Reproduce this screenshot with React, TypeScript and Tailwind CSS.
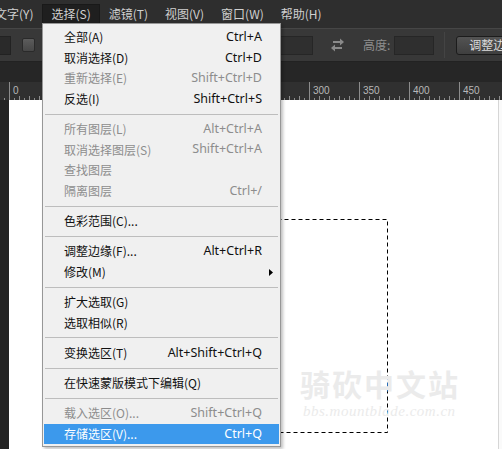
import React from "react";

type Item =
  | { sep: true }
  | { sep?: false; l: string; s?: string; d?: boolean; sub?: boolean; hl?: boolean };

const items: Item[] = [
  { l: "全部(A)", s: "Ctrl+A" },
  { l: "取消选择(D)", s: "Ctrl+D" },
  { l: "重新选择(E)", s: "Shift+Ctrl+D", d: true },
  { l: "反选(I)", s: "Shift+Ctrl+S" },
  { sep: true },
  { l: "所有图层(L)", s: "Alt+Ctrl+A", d: true },
  { l: "取消选择图层(S)", s: "Shift+Ctrl+A", d: true },
  { l: "查找图层", d: true },
  { l: "隔离图层", s: "Ctrl+/", d: true },
  { sep: true },
  { l: "色彩范围(C)..." },
  { sep: true },
  { l: "调整边缘(F)...", s: "Alt+Ctrl+R" },
  { l: "修改(M)", sub: true },
  { sep: true },
  { l: "扩大选取(G)" },
  { l: "选取相似(R)" },
  { sep: true },
  { l: "变换选区(T)", s: "Alt+Shift+Ctrl+Q" },
  { sep: true },
  { l: "在快速蒙版模式下编辑(Q)" },
  { sep: true },
  { l: "载入选区(O)...", s: "Shift+Ctrl+Q", d: true },
  { l: "存储选区(V)...", s: "Ctrl+Q", hl: true },
];

const menuBar = ["文字(Y)", "选择(S)", "滤镜(T)", "视图(V)", "窗口(W)", "帮助(H)"];

function Ruler() {
  const ticks: React.ReactNode[] = [];
  for (let v = -5; v <= 495; v += 5) {
    const x = 9 + v + 0.5;
    let h = 2;
    if (v % 50 === 0) h = 18;
    else if (v % 10 === 0) h = 4;
    ticks.push(<line key={v} x1={x} x2={x} y1={18 - h} y2={18} stroke="#8c8c8c" strokeWidth={1} />);
  }
  const labels: React.ReactNode[] = [];
  for (const v of [0, 300, 350, 400, 450]) {
    labels.push(
      <text key={v} x={9 + v + 4} y={12} fill="#b8b8b8" fontSize={10} fontFamily="'Liberation Sans', Arial, sans-serif">
        {v}
      </text>
    );
  }
  return (
    <svg width={502} height={18} className="block">
      {ticks}
      {labels}
    </svg>
  );
}

export default function App() {
  return (
    <div
      className="relative w-[502px] h-[449px] overflow-hidden bg-[#2b2b2b] text-[12px]"
      style={{ fontFamily: "'Noto Sans', 'Noto Sans CJK SC', sans-serif" }}
    >
      {/* menu bar */}
      <div className="h-[28px] bg-[#2e2e2e] flex items-center gap-[1px] text-[#d0d0d0]">
        {menuBar.map((m, i) => (
          <div
            key={m}
            className={
              "h-[20px] px-[8px] flex items-center whitespace-nowrap " +
              (i === 0 ? "ml-[-13px] " : "") +
              (i === 1 ? "bg-[#1f1f1f] border border-[#191919] px-[7px]" : "")
            }
            style={{ fontFamily: "'Noto Sans CJK SC', sans-serif" }}
          >
            {m}
          </div>
        ))}
      </div>

      {/* options bar */}
      <div className="h-[34px] bg-[#383838] border-t border-[#464646] border-b border-b-[#222222] flex items-center">
        <div className="ml-[-20px] w-[31px] h-[19px] bg-[#2a2a2a] border border-[#222222] shrink-0" />
        <div className="ml-[11px] w-[13px] h-[14px] rounded-[2px] bg-gradient-to-b from-[#5c5c5c] to-[#474747] border border-[#2a2a2a] shrink-0" />
        <div className="ml-[230px] w-[48px] h-[19px] bg-[#2f2f2f] border border-[#262626] shrink-0" />
        <svg className="ml-[17px] shrink-0" width={15} height={16} viewBox="0 0 15 16">
          <line x1={3} y1={5} x2={11} y2={5} stroke="#8a8a8a" strokeWidth={2} />
          <polygon points="10,1.5 14,5 10,8.5" fill="#8a8a8a" />
          <line x1={4} y1={11} x2={12} y2={11} stroke="#8a8a8a" strokeWidth={2} />
          <polygon points="5,7.5 1,11 5,14.5" fill="#8a8a8a" />
        </svg>
        <span className="ml-[18px] text-[#8e8e8e] whitespace-nowrap" style={{ fontFamily: "'Noto Sans CJK SC', sans-serif" }}>
          高度:
        </span>
        <div className="ml-[4px] w-[40px] h-[19px] bg-[#2f2f2f] border border-[#262626] shrink-0" />
        <div className="ml-[10px] w-[1px] h-[26px] bg-[#262626] border-r border-[#444444] shrink-0" />
        <div
          className="ml-[11px] h-[19px] w-[90px] shrink-0 rounded-[3px] border border-[#1c1c1c] bg-gradient-to-b from-[#535353] to-[#3f3f3f] text-[#dcdcdc] pl-[12px] flex items-center whitespace-nowrap"
          style={{ fontFamily: "'Noto Sans CJK SC', sans-serif" }}
        >
          调整边缘...
        </div>
      </div>

      {/* tab strip */}
      <div className="h-[20px] bg-[#262626]" />

      {/* ruler */}
      <div className="h-[18px] bg-[#303030]">
        <Ruler />
      </div>

      {/* canvas row */}
      <div className="flex h-[349px]">
        <div className="w-[9px] bg-[#232323]" />
        <div className="relative w-[490px] bg-white border-r border-[#d6d6d6]">
          <svg className="absolute left-[100px] top-[119px]" width={280} height={215}>
            <rect x={0.5} y={0.5} width={278} height={213} fill="none" stroke="#000" strokeWidth={1} strokeDasharray="4 3" />
          </svg>
          <div className="absolute left-[291px] top-[268px] text-[#ebebeb] leading-none">
            <div className="text-[30px] font-bold tracking-[2px]" style={{ fontFamily: "'Noto Sans CJK SC', serif" }}>
              骑砍中文站
            </div>
            <div className="mt-[6px] ml-[3px] text-[15px] italic tracking-[0.5px]" style={{ fontFamily: "'Liberation Serif', serif" }}>
              bbs.mountblade.com.cn
            </div>
          </div>
        </div>
        <div className="flex-1 bg-[#fafafa]" />
      </div>

      {/* dropdown menu */}
      <div className="absolute left-[42px] top-[23px] w-[239px] bg-[#f0f0f0] border border-[#979797] pt-[3px] pb-[2px] px-[1px] shadow-[2px_2px_3px_rgba(0,0,0,0.25)]">
        {items.map((it, i) =>
          it.sep ? (
            <div key={i} className="h-[9.6px] flex items-center px-[1px]">
              <div className="h-[1px] w-full bg-[#bdbdbd]" />
            </div>
          ) : (
            <div
              key={i}
              className={
                "relative h-[20.6px] flex items-center justify-between pl-[20px] pr-[17px] whitespace-nowrap " +
                (it.hl ? "bg-[#3c99ec] text-white " : it.d ? "text-[#8d8d8d] " : "text-[#111111] ")
              }
            >
              <span style={{ fontFamily: "'Noto Sans CJK SC', sans-serif" }}>{it.l}</span>
              {it.s && <span className="text-[12.5px]">{it.s}</span>}
              {it.sub && (
                <svg className="absolute right-[6px] top-[7px]" width={4} height={7} viewBox="0 0 4 7">
                  <polygon points="0,0 4,3.5 0,7" fill="#000" />
                </svg>
              )}
            </div>
          )
        )}
      </div>
    </div>
  );
}
